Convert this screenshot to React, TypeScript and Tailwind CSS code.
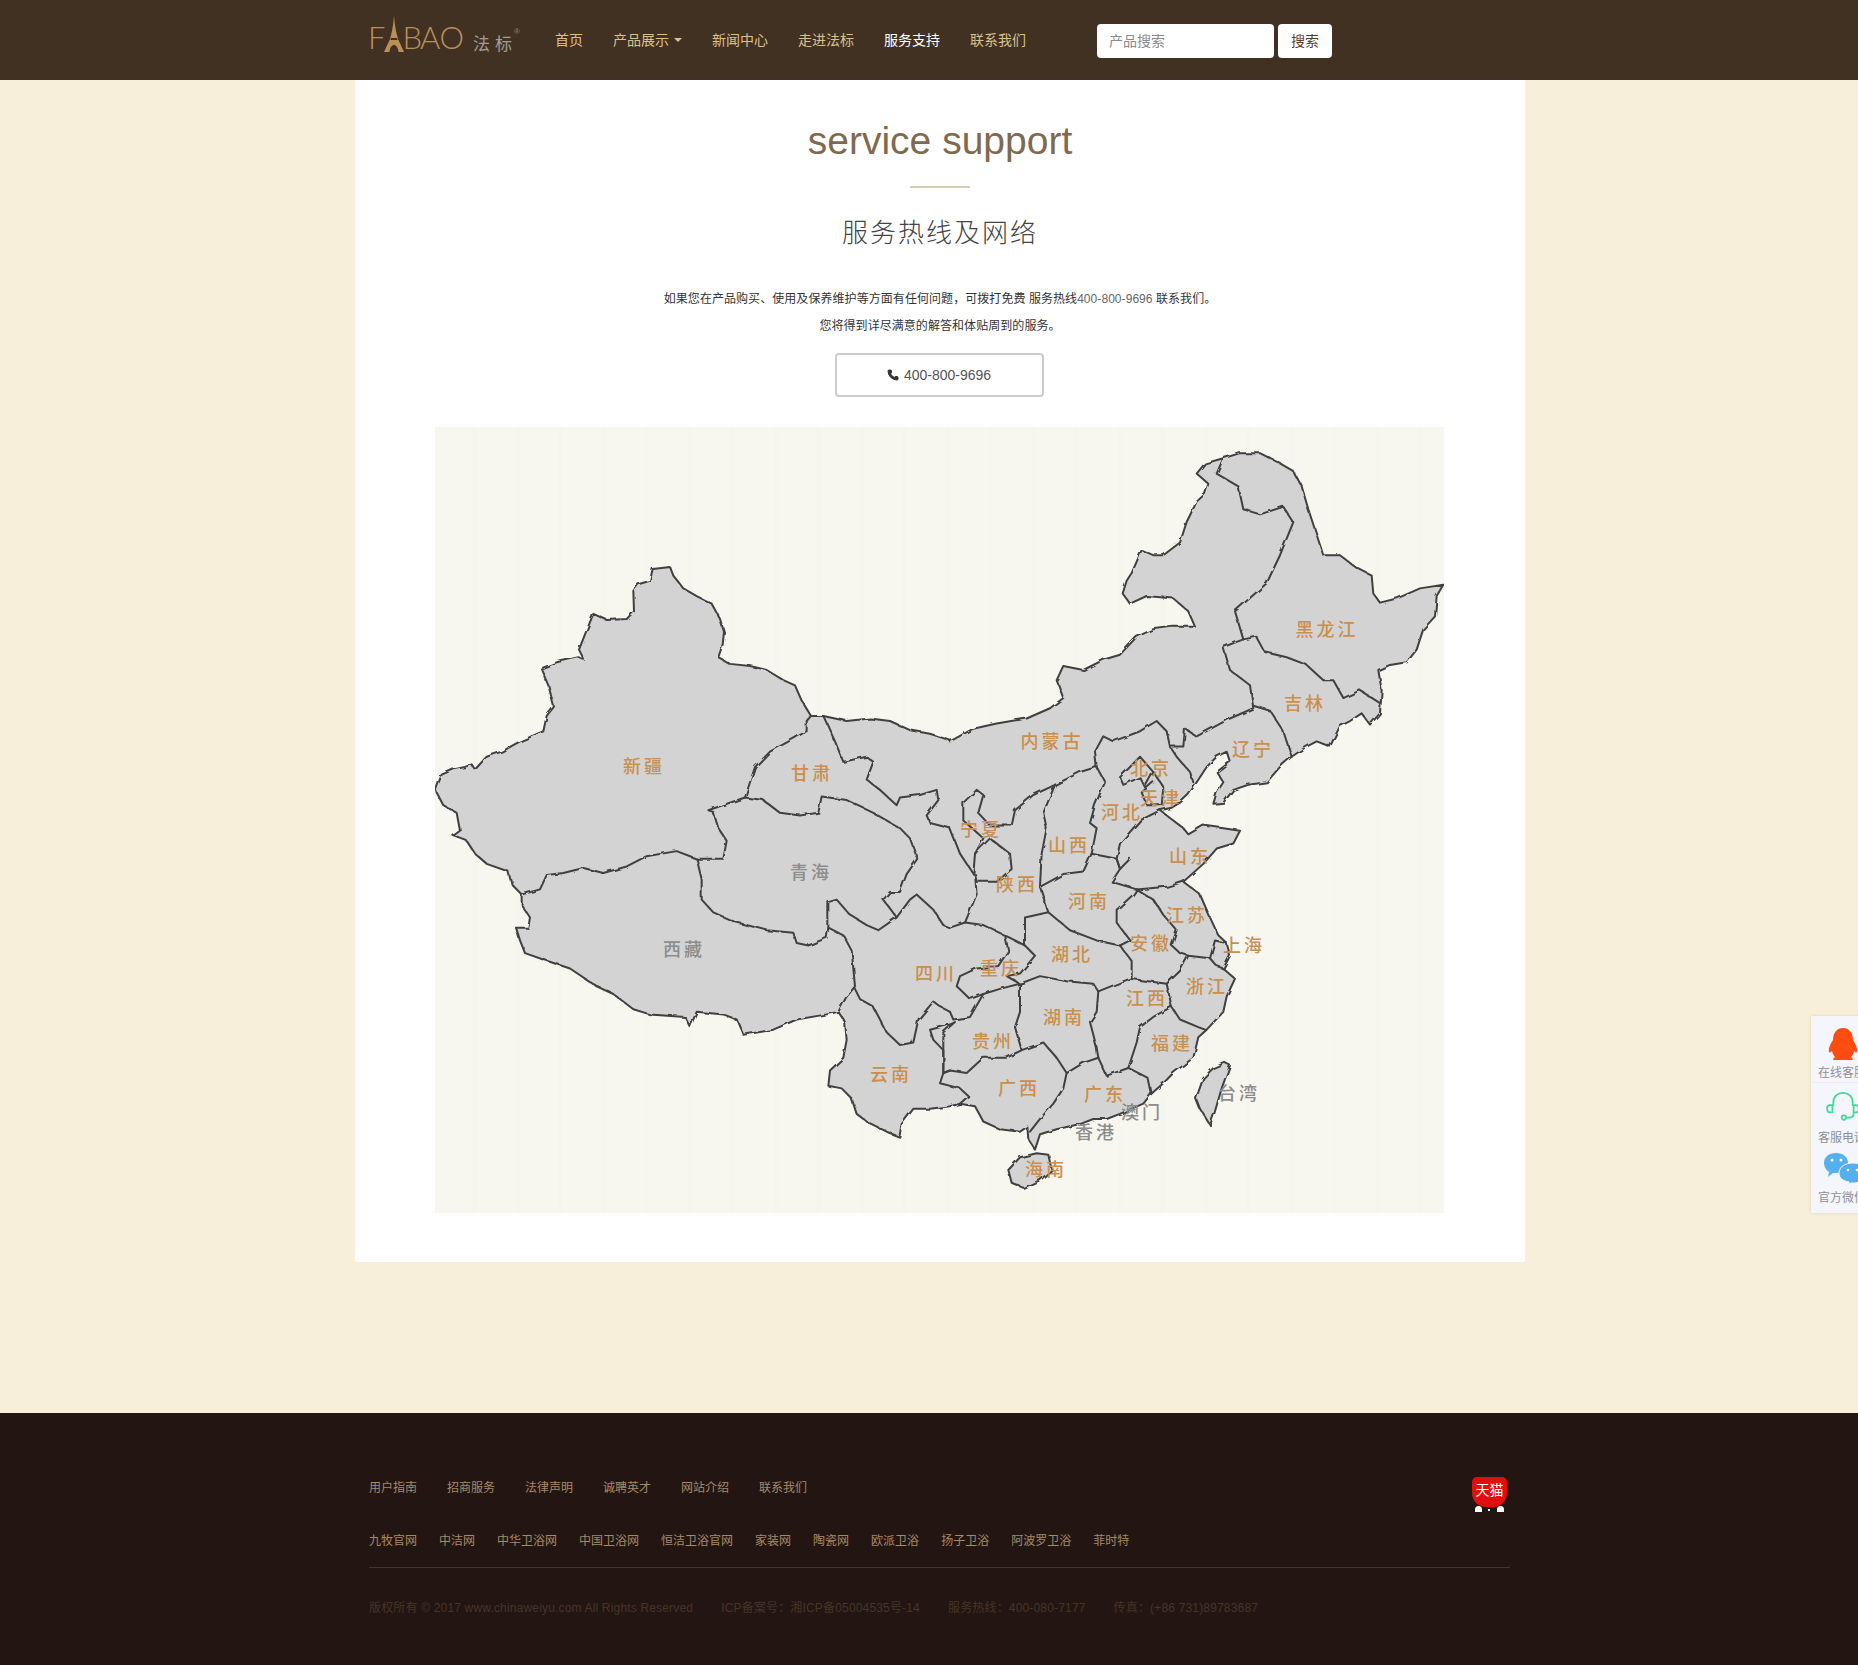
import { Phone } from 'lucide-react'

const cjk = "font-['Liberation_Sans','Noto_Sans_CJK_SC',sans-serif]"

// traced from the map, x*3 and y*1.96 around a page origin of (430, 420)
const WEST_TOP = '18,725 35,695 70,685 105,680 125,675 135,685 170,660 215,650 270,630 340,610 350,580 372,562 355,520 333,487 380,475 445,465 462,470 447,450 465,420 490,380 530,392 590,390 612,375 610,335 625,322 660,315 668,292 695,290 720,288 730,305 760,330 800,345 845,360 870,390 882,415 878,440 865,465 900,478 960,482 1010,490 1060,510 1095,520 1115,550 1143,580 1180,580 1250,590 1320,585 1380,590 1440,608 1500,615 1560,628'
const EAST_COAST = '30,630 100,605 170,595 260,585 330,565 370,545 350,510 370,482 430,490 490,470 540,460 590,425 640,410 700,405 765,405 745,375 700,350 620,345 570,360 548,340 560,315 575,300 605,255 640,265 670,265 720,240 740,200 770,160 795,145 805,125 770,105 795,85 850,75 900,65 960,65 1020,85 1060,100 1085,130 1105,175 1130,225 1150,265 1200,265 1250,290 1295,305 1300,340 1320,358 1370,350 1440,330 1510,323 1490,345 1485,385 1450,410 1430,450 1400,475 1350,480 1315,490 1325,530 1320,575 1290,597 1265,575 1230,590 1200,600 1170,640 1130,630 1100,640 1055,660 1020,680 980,710 925,715 880,725 850,750 820,752 830,730 850,710 830,690 870,670 860,650 830,660 800,680 770,710 745,735 720,750 695,760 660,765 690,780 730,800 745,812 790,795 850,800 900,805 880,830 830,840 790,870 730,905 780,930 810,975 835,1010 860,1025 870,1050 850,1075 885,1095 860,1130 850,1160 800,1195 775,1210 760,1250 700,1280 670,1300 635,1320 610,1340 540,1360 500,1370 460,1370 420,1380 350,1390 300,1400 285,1430 265,1410 262,1385 240,1395 180,1390 130,1375 105,1345 60,1340 30,1345'
const WEST_BOTTOM = '1500,1350 1450,1350 1415,1380 1408,1405 1370,1395 1340,1385 1310,1375 1280,1360 1265,1330 1235,1310 1195,1305 1200,1275 1240,1250 1250,1215 1245,1180 1225,1160 1190,1165 1100,1175 1030,1195 940,1205 920,1175 880,1165 800,1160 780,1190 765,1170 660,1165 610,1155 550,1125 500,1110 420,1075 350,1060 285,1045 270,1020 258,995 295,995 300,975 275,950 275,930 245,910 235,885 170,870 135,850 110,825 70,815 90,805 80,770 40,755 20,730'
const TAIWAN = '855,1260 870,1265 845,1310 825,1355 810,1382 780,1350 768,1330 790,1290 820,1270'
const HAINAN = '205,1470 240,1445 290,1437 325,1440 335,1470 300,1490 250,1505 215,1495'

const WEST_LINES = [
  '275,930 330,920 350,892 400,888 460,878 520,888 590,875 650,855 740,845 800,860 880,860 890,825 865,800 850,768 835,765 945,740',
  '945,740 975,680 1020,650 1090,625 1130,610 1130,590 1143,580',
  '800,860 815,900 815,940 850,965 920,985 1010,1000 1090,1005 1100,1025 1135,1030 1190,1015 1195,995 1240,1010 1265,1040 1275,1110 1250,1130 1225,1160',
  '945,740 1000,745 1050,770 1110,775 1165,770 1175,738 1250,745 1330,770 1410,800 1440,820 1462,860 1430,890 1410,925 1380,925 1360,940 1400,975 1345,1000 1310,990 1260,970 1220,940 1195,945 1195,995',
  '1400,975 1440,940 1460,930 1510,960 1540,990 1560,995',
  '1180,580 1215,630 1240,670 1310,660 1330,670 1310,705 1350,725 1400,755 1410,740 1470,735 1520,725 1525,745 1490,775 1500,790 1560,800',
  '1275,1115 1290,1135 1330,1150 1370,1200 1410,1225 1450,1220 1465,1175 1510,1140 1530,1150 1560,1160',
  '1560,1185 1500,1195 1510,1215 1540,1235 1540,1280 1560,1275',
]
const EAST_LINES = [
  '30,800 60,850 100,890 105,850 130,820 70,785 70,750 110,725 130,735 115,770 150,795 215,795 225,765 280,735 345,715 420,690 470,680 465,650 490,620 520,630 600,610 650,590 680,610 690,640 730,640 735,605 770,620 870,585 940,565 930,520 870,490 850,445 910,430 885,375 980,320 1020,265 1060,200 1030,170 960,185 910,175 895,130 830,105 850,75',
  '910,430 950,425 975,455 1040,465 1100,480 1150,510 1180,510 1210,545 1260,530 1320,555',
  '940,560 990,570 1030,610 1055,660',
  '690,640 710,660 750,690 760,710',
  '470,680 495,710 465,755 450,790 470,800 455,850 530,860 540,880 570,860',
  '660,765 600,785 540,830 530,860 540,880 515,905 590,920 680,915 730,905',
  '540,700 570,680 600,660 640,690 615,720 600,700 550,715 540,700',
  '640,690 670,720 665,755 620,755 605,730 640,710',
  '345,715 310,770 320,800 305,850 300,915 370,890 430,885 455,850',
  '300,915 325,965 390,1000 470,1020 540,1030 570,1020 530,985 530,960 580,930 590,920',
  '325,965 255,975 255,1030 195,1010 130,990 75,985 110,930 105,890 110,905 170,905 215,880 210,850 150,820 105,850',
  '30,995 75,985',
  '255,1030 285,1050 240,1085 200,1090 240,1105',
  '195,1010 205,1040 175,1070 110,1075 60,1090 50,1110 90,1135 130,1125 180,1115 240,1105',
  '240,1105 300,1090 380,1100 460,1105 475,1120 470,1160 450,1180 470,1230 475,1250 430,1260 380,1280 350,1250 310,1220 245,1235',
  '240,1105 240,1160 225,1190 245,1235 200,1250 130,1250 80,1280 30,1275 10,1280',
  '380,1280 370,1310 340,1340 300,1370 270,1395',
  '475,1120 570,1095 680,1105 720,1080 745,1050',
  '540,1030 575,1060 575,1095',
  '590,920 640,940 670,970 710,1000 695,1030 720,1045 745,1050 810,1055 825,1020 860,1025',
  '810,1055 830,1070 850,1075',
  '680,1105 695,1150 720,1175 775,1190 795,1195',
  '695,1150 640,1170 600,1190 590,1220 565,1270 625,1290 635,1320',
  '475,1250 500,1285 565,1270',
  '30,1160 40,1175 90,1170 130,1125',
  '30,1185 45,1180 10,1200 10,1240 10,1280 0,1300 60,1310 85,1325 60,1340',
]

const shift = (pts: string) =>
  pts.split(' ').map((p) => {
    const [x, y] = p.split(',').map(Number)
    return `${x + 1530},${y}`
  }).join(' ')

const LABELS: [string, number, number, boolean?][] = [
  ['新疆', 644, 765], ['甘肃', 812, 772], ['青海', 811, 871, true], ['西藏', 684, 948, true],
  ['四川', 936, 972], ['云南', 891, 1073], ['内蒙古', 1052, 740], ['黑龙江', 1327, 628],
  ['吉林', 1305, 702], ['辽宁', 1253, 748], ['北京', 1151, 767], ['天津', 1161, 797],
  ['河北', 1122, 811], ['山西', 1069, 844], ['宁夏', 981, 828], ['山东', 1190, 855],
  ['陕西', 1017, 883], ['河南', 1089, 900], ['江苏', 1187, 914], ['上海', 1244, 944],
  ['安徽', 1151, 942], ['湖北', 1072, 953], ['重庆', 1001, 967], ['浙江', 1207, 985],
  ['江西', 1147, 997], ['湖南', 1064, 1016], ['贵州', 993, 1040], ['福建', 1172, 1042],
  ['广西', 1019, 1087], ['广东', 1105, 1093], ['台湾', 1239, 1092, true], ['澳门', 1142, 1111, true],
  ['香港', 1096, 1131, true], ['海南', 1046, 1168],
]

const NAV = ['首页', '产品展示', '新闻中心', '走进法标', '服务支持', '联系我们']
const LINKS = ['用户指南', '招商服务', '法律声明', '诚聘英才', '网站介绍', '联系我们']
const FRIENDS = ['九牧官网', '中洁网', '中华卫浴网', '中国卫浴网', '恒洁卫浴官网', '家装网', '陶瓷网', '欧派卫浴', '扬子卫浴', '阿波罗卫浴', '菲时特']

function Tower() {
  return (
    <svg width="20" height="36" viewBox="0 0 20 36" className="-mx-[1px] self-end">
      <path d="M10 0 L10.8 8 L12 15 L14 23 L20 36 L14.500 36 C14 31 12 29 10 29 C8 29 6 31 5.500 36 L0 36 L6 23 L8 15 L9.200 8 Z" fill="#b98f58" />
      <path d="M7 22 H13 L13.600 24 H6.400 Z" fill="#413123" />
    </svg>
  )
}

function Logo() {
  return (
    <div className="flex h-[80px] w-[171px] items-start">
      <div className="mt-[16px] -ml-[1px] flex h-[36px] items-end text-[31px] leading-[30px] font-light tracking-[-1px] text-[#b98f58] font-['Lato','Liberation_Sans',sans-serif]">
        <span>F</span>
        <Tower />
        <span>B</span>
        <span className="-ml-[1px]">A</span>
        <span>O</span>
      </div>
      <span className="mt-[33px] ml-[10px] text-[17px] leading-[20px] tracking-[5px] whitespace-nowrap text-[#a39c90] font-['Noto_Sans_CJK_SC',sans-serif]">法标</span>
      <span className="mt-[27px] -ml-[3px] text-[8px] leading-[10px] text-[#8d8478]">®</span>
    </div>
  )
}

function Header() {
  return (
    <header className="h-[80px] bg-[#413123]">
      <div className={`mx-auto flex h-full w-[1171px] items-start px-[15px] ${cjk}`}>
        <Logo />
        <nav className="flex h-full items-center">
          {NAV.map((item) => (
            <a key={item} className={`flex items-center gap-[5px] px-[15px] text-[14px] whitespace-nowrap ${item === '服务支持' ? 'text-white' : 'text-[#dcc08c]'}`}>
              {item}
              {item === '产品展示' && <span className="h-0 w-0 border-x-[4px] border-t-[4px] border-x-transparent border-t-[#dcc08c]" />}
            </a>
          ))}
        </nav>
        <div className="mt-[24px] ml-[56px] flex gap-[4px]">
          <div className="flex h-[34px] w-[177px] items-center rounded-[4px] bg-white px-[12px] text-[14px] text-[#8a8a8a]">产品搜索</div>
          <button type="button" className="h-[34px] w-[54px] rounded-[4px] bg-white text-[14px] text-[#5a3d28]">搜索</button>
        </div>
      </div>
    </header>
  )
}

function ChinaMap() {
  const outline = [WEST_TOP, shift(EAST_COAST), WEST_BOTTOM].join(' ')
  return (
    <div className="h-[786px] w-[1009px] bg-[repeating-linear-gradient(90deg,#f7f6ef_0px,#f7f6ef_37px,#f6f5ed_39px,#f7f6ef_43px)]">
      <svg width="1009" height="786" viewBox="435 427 1009 786" className="block">
        <defs>
          <filter id="rough" x="-2%" y="-2%" width="104%" height="104%">
            <feTurbulence type="fractalNoise" baseFrequency="0.09" numOctaves="2" seed="4" />
            <feDisplacementMap in="SourceGraphic" scale="4" />
          </filter>
        </defs>
        <g filter="url(#rough)">
          <g transform="translate(430 420) scale(0.33333 0.5102)" stroke="#3f3f3f" strokeLinejoin="round" strokeLinecap="round">
            <polygon points={outline} fill="#d3d3d3" strokeWidth="2" vectorEffect="non-scaling-stroke" />
            <polygon points={shift(TAIWAN)} fill="#d3d3d3" strokeWidth="2" vectorEffect="non-scaling-stroke" />
            <polygon points={shift(HAINAN)} fill="#d3d3d3" strokeWidth="2" vectorEffect="non-scaling-stroke" />
            {WEST_LINES.map((pts) => (
              <polyline key={pts} points={pts} fill="none" strokeWidth="2" vectorEffect="non-scaling-stroke" />
            ))}
            {EAST_LINES.map((pts) => (
              <polyline key={pts} points={shift(pts)} fill="none" strokeWidth="2" vectorEffect="non-scaling-stroke" />
            ))}
          </g>
        </g>
        {LABELS.map(([name, x, y, grey]) => (
          <text
            key={name}
            x={x}
            y={y}
            textAnchor="middle"
            dominantBaseline="central"
            fontSize="18"
            fontWeight="500"
            letterSpacing="3"
            fontFamily="'Noto Sans CJK SC', sans-serif"
            fill={grey ? '#8c8c8c' : '#c98f4e'}
          >
            {name}
          </text>
        ))}
      </svg>
    </div>
  )
}

function Main() {
  return (
    <main className={`ml-[355px] flex h-[1182px] w-[1170px] flex-col items-center bg-white ${cjk}`}>
      <h1 className="mt-[36px] h-[50px] text-[39px] leading-[50px] text-[#7f6a4f]">service support</h1>
      <div className="mt-[20px] h-[2px] w-[60px] bg-[#d9cbae]" />
      <h2 className="mt-[29px] h-[32px] text-[26px] leading-[32px] font-light tracking-[2px] text-[#444]">服务热线及网络</h2>
      <p className="mt-[37px] text-[12px] leading-[27px] tracking-[0.06px] text-[#333]">
        如果您在产品购买、使用及保养维护等方面有任何问题，可拨打免费 服务热线<span className="text-[#666]">400-800-9696</span> 联系我们。
      </p>
      <p className="text-[12px] leading-[27px] tracking-[0.06px] text-[#333]">您将得到详尽满意的解答和体贴周到的服务。</p>
      <a className="mt-[13px] -ml-[2px] flex h-[44px] w-[209px] items-center justify-center gap-[5px] rounded-[4px] border-2 border-[#ccc] text-[14px] text-[#555]">
        <Phone size={12} fill="#333" stroke="#333" />
        400-800-9696
      </a>
      <div className="mt-[30px] -ml-[2px]">
        <ChinaMap />
      </div>
    </main>
  )
}

function Tmall() {
  return (
    <div className="relative h-[35px] w-[35px] overflow-hidden">
      <div className="flex h-[30px] w-[35px] items-center justify-center rounded-t-[5px] rounded-b-[14px] bg-[#e00f0f] pb-[4px] text-[14px] leading-none whitespace-nowrap text-white">天猫</div>
      <span className="absolute bottom-0 left-[3px] h-[6px] w-[7px] rounded-t-full bg-white" />
      <span className="absolute bottom-[1px] left-[16px] h-[2px] w-[2px] bg-white" />
      <span className="absolute right-[3px] bottom-0 h-[6px] w-[7px] rounded-t-full bg-white" />
    </div>
  )
}

function Footer() {
  return (
    <footer className={`mt-[151px] h-[252px] bg-[#231612] ${cjk}`}>
      <div className="mx-auto w-[1171px] px-[15px]">
        <div className="flex h-[64px] items-start justify-between">
          <div className="mt-[66px] flex gap-[30px] text-[12px] leading-[18px] whitespace-nowrap text-[#a58a69]">
            {LINKS.map((item) => <a key={item}>{item}</a>)}
          </div>
          <div className="mt-[64px] mr-[3px]"><Tmall /></div>
        </div>
        <div className="mt-[55px] flex gap-[22px] text-[12px] leading-[18px] whitespace-nowrap text-[#a58a69]">
          {FRIENDS.map((item) => <a key={item}>{item}</a>)}
        </div>
        <div className="mt-[17px] h-px bg-[#44362e]" />
        <div className="mt-[31px] flex gap-[28px] text-[12px] leading-[18px] tracking-[0.17px] whitespace-nowrap text-[#463427]">
          <span>版权所有 © 2017 www.chinaweiyu.com All Rights Reserved</span>
          <span>ICP备案号：湘ICP备05004535号-14</span>
          <span>服务热线：400-080-7177</span>
          <span>传真：(+86 731)89783687</span>
        </div>
      </div>
    </footer>
  )
}

function SideBar() {
  return (
    <aside className={`absolute top-[1016px] left-[1811px] flex h-[197px] w-[62px] flex-col bg-[#f5f6fc] shadow-[0_0_3px_rgba(0,0,0,0.12)] ${cjk}`}>
      <div className="flex h-[67px] flex-col items-center border-b border-[#eceef6] pt-[11px]">
        <svg width="34" height="34" viewBox="0 0 34 34" className="ml-[2px]">
          <path d="M17 1 C24 1 27 7 27 13 C29 16 32 21 31 25 C30 26 28.500 25 28 24 C27.500 27 26 29 25 30 C27 31 28 33 25 33 H20 C18 33 16 33 14 33 H9 C6 33 7 31 9 30 C8 29 6.500 27 6 24 C5 25 3.500 26 3 25 C2 21 5 16 7 13 C7 7 10 1 17 1 Z" fill="#ff4d12" />
        </svg>
        <span className="mt-[4px] text-[12px] leading-[16px] whitespace-nowrap text-[#8f9196]">在线客服</span>
      </div>
      <div className="flex h-[63px] flex-col items-center pt-[9px]">
        <svg width="38" height="34" viewBox="0 0 38 34" fill="none" stroke="#3ddc97" strokeWidth="2" className="ml-[2px]">
          <path d="M8 16 V12 C8 5 13 1 19 1 C25 1 30 5 30 12 V16" />
          <path d="M7 15 H4 C2 15 1 17 1 19 C1 21 2 23 4 23 H7 Z" />
          <path d="M31 15 H34 C36 15 37 17 37 19 C37 21 36 23 34 23 H31 Z" />
          <path d="M22 29 H26 C29 29 31 27 31 24" />
          <circle cx="20" cy="29" r="2.500" />
        </svg>
        <span className="mt-[8px] text-[12px] leading-[16px] whitespace-nowrap text-[#8f9196]">客服电话</span>
      </div>
      <div className="flex flex-1 flex-col items-center">
        <svg width="46" height="36" viewBox="0 0 46 36" className="mt-[6px] ml-[7px]">
          <path d="M13 1 C20 1 25 5 25 11 C25 17 20 21 13 21 L10 21 L5 25 L6 20 C3 18 1 15 1 11 C1 5 6 1 13 1 Z" fill="#55b0ee" />
          <circle cx="9" cy="8" r="1.500" fill="#fff" />
          <circle cx="18" cy="8" r="1.500" fill="#fff" />
          <path d="M30 11 C38 11 45 15 45 21 C45 27 38 31 30 31 L28 31 L26 32 L26 30 C20 29 16 26 16 21 C16 15 22 11 30 11 Z" fill="#55b0ee" stroke="#f5f6fc" strokeWidth="1" />
          <circle cx="25" cy="18" r="1.300" fill="#fff" />
          <circle cx="34" cy="18" r="1.300" fill="#fff" />
        </svg>
        <span className="mt-[2px] text-[12px] leading-[16px] whitespace-nowrap text-[#8f9196]">官方微信</span>
      </div>
    </aside>
  )
}

export default function App() {
  return (
    <div className="h-[1665px] w-full overflow-hidden">
      <div className="relative h-[1665px] w-[1879px] bg-[#f7efd9]">
        <Header />
        <Main />
        <Footer />
        <SideBar />
      </div>
    </div>
  )
}
